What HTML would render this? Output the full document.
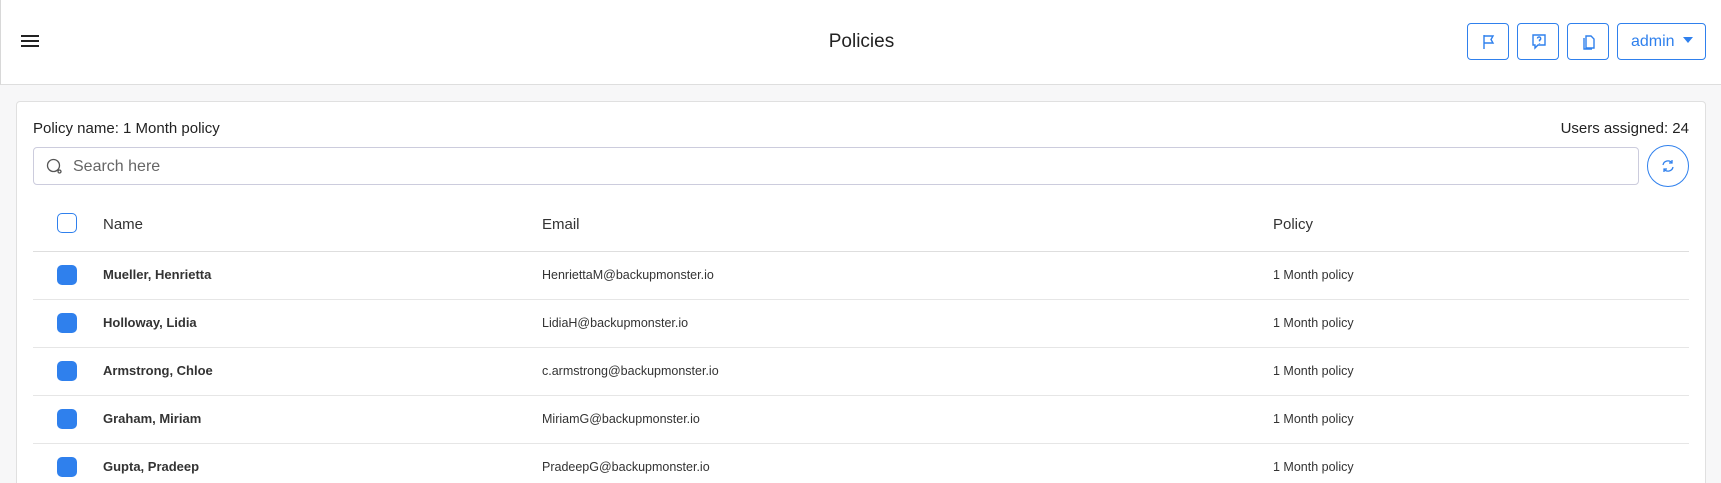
<!DOCTYPE html>
<html style="width:1721px;height:483px;overflow:hidden"><head><meta charset="utf-8">
<style>
*{box-sizing:border-box;margin:0;padding:0}
html,body{width:1721px;height:483px;overflow:hidden}
body{background:#f7f7f8;font-family:"Liberation Sans",sans-serif;color:#222;position:relative}
.hdr{position:absolute;left:0;top:0;width:1721px;height:85px;background:#fff;border-bottom:1px solid #dedede;border-left:1px solid #d8d8d8}
.ham{position:absolute;left:20px;width:18px;height:2px;background:#222}
.title{position:absolute;left:0;width:1721px;top:31px;text-align:center;font-size:19px;color:#222}
.btn{position:absolute;top:23px;height:37px;border:1px solid #2f80ed;border-radius:4px;background:#fff;color:#2f80ed}
.btn svg{position:absolute;left:12px;top:9px}
.card{position:absolute;left:16px;top:101px;width:1690px;height:382px;background:#fff;border:1px solid #e0e0e0;border-bottom:none;border-radius:4px 4px 0 0}
.abs{position:absolute}
.search{position:absolute;left:33px;top:147px;width:1606px;height:38px;border:1px solid #ccd;border-radius:4px;background:#fff}
.line{position:absolute;left:33px;width:1656px;height:1px;background:#e6e6e6}
.cb{position:absolute;left:57px;width:20px;height:20px;border-radius:5px;background:#2f80ed}
.name{position:absolute;left:103px;font-size:13px;font-weight:bold;color:#333}
.em{position:absolute;left:542px;font-size:12.5px;color:#333}
.pol{position:absolute;left:1273px;font-size:12.5px;color:#333}
</style></head><body>
<div class="hdr">
<div class="ham" style="top:35px"></div><div class="ham" style="top:40px"></div><div class="ham" style="top:45px"></div>
<div class="title">Policies</div>
<div class="btn" style="left:1466px;width:42px"><svg width="18" height="18" viewBox="0 0 18 18" fill="none" stroke="#2f80ed" stroke-width="1.4"><path d="M4 2v14M4 3h9l-2 3.5 2 3.5H4"/></svg></div>
<div class="btn" style="left:1516px;width:42px"><svg width="18" height="18" viewBox="0 0 18 18" fill="none" stroke="#2f80ed" stroke-width="1.4"><path d="M3 2h12v10H8l-3 3v-3H3z"/><path d="M7.5 5.5a1.6 1.6 0 1 1 2 1.6v1.3M9.5 10v.6"/></svg></div>
<div class="btn" style="left:1566px;width:42px"><svg width="18" height="18" viewBox="0 0 18 18" fill="none" stroke="#2f80ed" stroke-width="1.4"><path d="M6 3h5l3 3v9H6z"/><path d="M4 5v11h8"/></svg></div>
<div class="btn" style="left:1616px;width:89px;font-size:16px;line-height:35px;padding-left:13px">admin <span style="display:inline-block;width:0;height:0;border-left:5px solid transparent;border-right:5px solid transparent;border-top:6px solid #2f80ed;vertical-align:3px;margin-left:4px"></span></div>
</div>
<div class="card"></div>
<div class="abs" style="left:33px;top:120px;font-size:15px">Policy name: 1 Month policy</div>
<div class="abs" style="right:32px;top:120px;font-size:15px">Users assigned: 24</div>
<div class="search">
<svg class="abs" style="left:12px;top:10px" width="17" height="17" viewBox="0 0 17 17" fill="none" stroke="#555" stroke-width="1.3"><circle cx="7.5" cy="7.5" r="6"/><circle cx="13.5" cy="13.5" r="1.5"/></svg>
<div class="abs" style="left:39px;top:10px;font-size:16px;color:#666">Search here</div>
</div>
<div class="abs" style="left:1647px;top:145px;width:42px;height:42px;border:1px solid #2f80ed;border-radius:50%;background:#fff">
<svg class="abs" style="left:11px;top:11px" width="18" height="18" viewBox="0 0 18 18" fill="none" stroke="#2f80ed" stroke-width="1.3"><path d="M4 8a5 5 0 0 1 9-2M14 10a5 5 0 0 1-9 2"/><path d="M13 3v3h-3M5 15v-3h3"/></svg>
</div>
<div class="abs" style="left:57px;top:213px;width:20px;height:20px;border:1.5px solid #2f80ed;border-radius:5px;background:#fff"></div>
<div class="abs" style="left:103px;top:216px;font-size:15px;color:#333">Name</div>
<div class="abs" style="left:542px;top:216px;font-size:15px;color:#333">Email</div>
<div class="abs" style="left:1273px;top:216px;font-size:15px;color:#333">Policy</div>
<div class="line" style="top:251px;background:#dedede"></div>

<div class="cb" style="top:265px"></div><div class="name" style="top:267px">Mueller, Henrietta</div><div class="em" style="top:268px">HenriettaM@backupmonster.io</div><div class="pol" style="top:268px">1 Month policy</div>
<div class="line" style="top:299px"></div>
<div class="cb" style="top:313px"></div><div class="name" style="top:315px">Holloway, Lidia</div><div class="em" style="top:316px">LidiaH@backupmonster.io</div><div class="pol" style="top:316px">1 Month policy</div>
<div class="line" style="top:347px"></div>
<div class="cb" style="top:361px"></div><div class="name" style="top:363px">Armstrong, Chloe</div><div class="em" style="top:364px">c.armstrong@backupmonster.io</div><div class="pol" style="top:364px">1 Month policy</div>
<div class="line" style="top:395px"></div>
<div class="cb" style="top:409px"></div><div class="name" style="top:411px">Graham, Miriam</div><div class="em" style="top:412px">MiriamG@backupmonster.io</div><div class="pol" style="top:412px">1 Month policy</div>
<div class="line" style="top:443px"></div>
<div class="cb" style="top:457px"></div><div class="name" style="top:459px">Gupta, Pradeep</div><div class="em" style="top:460px">PradeepG@backupmonster.io</div><div class="pol" style="top:460px">1 Month policy</div>
</body></html>
